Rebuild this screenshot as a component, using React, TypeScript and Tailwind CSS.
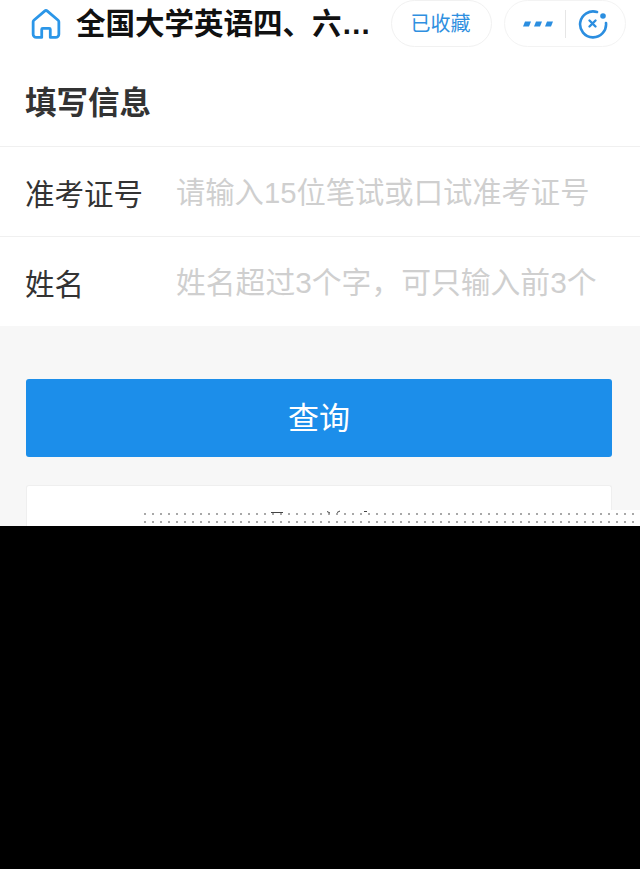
const FONT = "font-['Liberation_Sans','Noto_Sans_CJK_SC',sans-serif]"

function Header() {
  return (
    <div className="flex h-[47px] items-center bg-white pl-[31px] pr-[14px]">
      <svg width="30" height="30" viewBox="0 0 28 28" className="shrink-0" fill="none" stroke="#2b96e8" strokeWidth="2.6" strokeLinejoin="round">
        <path d="M10 26.5H5a3 3 0 0 1-3-3V12a2 2 0 0 1 .7-1.5L12.7 2a2 2 0 0 1 2.6 0l10 8.5a2 2 0 0 1 .7 1.5v11.5a3 3 0 0 1-3 3H18V19a1 1 0 0 0-1-1h-6a1 1 0 0 0-1 1z" />
      </svg>
      <div className="ml-[15px] w-[300px] shrink-0 whitespace-nowrap text-[29.5px] font-bold leading-[47px] text-[#111]">
        全国大学英语四、六…
      </div>
      <div className="ml-[15px] flex h-[47px] w-[101px] shrink-0 items-center justify-center rounded-full border border-[#f1f1f1] pr-[2px] text-[20px] text-[#2f8fe0]">
        已收藏
      </div>
      <div className="ml-[12px] flex h-[47px] w-[122px] shrink-0 items-center rounded-full border border-[#f3f3f3] pl-[18px]">
        <svg width="30" height="6" viewBox="0 0 30 6" className="shrink-0">
          <path d="M2 .5h6l-2 5H0zM13 .5h6l-2 5h-6zM24 .5h6l-2 5h-6z" fill="#2b8ee0" />
        </svg>
        <div className="ml-[12px] h-[28px] w-px bg-[#e6e6e6]" />
        <svg width="30" height="30" viewBox="0 0 30 30" className="ml-[12px] shrink-0" fill="none" stroke="#2b8ee0">
          <path d="M19 3a13 13 0 1 0 9 11" strokeWidth="2.6" strokeLinecap="round" />
          <circle cx="25" cy="7" r="2.8" fill="#2b8ee0" stroke="none" />
          <path d="M11.5 11.5l6 6M17.5 11.5l-6 6" strokeWidth="2.4" strokeLinecap="round" />
        </svg>
      </div>
    </div>
  )
}

function Row({ label, placeholder, inputSize }: { label: string; placeholder: string; inputSize: string }) {
  return (
    <div className="flex h-[90px] items-center border-t border-[#f0f0f0] pl-[25px]">
      <div className="w-[152px] shrink-0 pt-[8px] text-[29.5px] text-[#333]">{label}</div>
      <input
        placeholder={placeholder}
        className={`-ml-px min-w-0 flex-1 bg-transparent pt-[3px] outline-none placeholder:text-[#cfcfcf] ${inputSize}`}
      />
    </div>
  )
}

export default function App() {
  return (
    <div className={`flex h-[869px] w-[640px] flex-col overflow-hidden bg-[#f7f7f7] ${FONT}`}>
      <Header />
      <div className="flex h-[99px] items-center bg-white pl-[25px] pt-[14px] text-[31.5px] font-bold text-[#333]">
        填写信息
      </div>
      <div className="bg-white">
        <Row label="准考证号" placeholder="请输入15位笔试或口试准考证号" inputSize="text-[29.3px]" />
        <Row label="姓名" placeholder="姓名超过3个字，可只输入前3个" inputSize="text-[29.8px]" />
      </div>
      <div className="px-[26px] pt-[53px]">
        <button className="flex h-[78px] w-[586px] items-center justify-center rounded-[3px] bg-[#1c8eea] pt-[2px] text-[31px] text-white">
          查询
        </button>
        <div className="mt-[28px] h-[41px] w-[586px] rounded-t-[3px] border border-b-0 border-[#efefef] bg-white" />
      </div>
      <div className="relative flex-1 bg-black">
        {/* cut off dotted strip above the black area */}
        <div className="absolute left-[144px] right-0 top-[-16px] h-[16px] bg-white bg-[radial-gradient(circle,#a8a8a8_1px,transparent_1px)] bg-[length:8px_8px] bg-[position:-3px_0px]">
          <svg width="240" height="4" viewBox="0 0 240 4" className="absolute left-[125px] top-[0px]">
            <path d="M2 2.5h12M58 1.5l3 1.5M68 2.5l3-1.5M95 1.5h3" stroke="#444" strokeWidth="1" fill="none" />
          </svg>
        </div>
      </div>
    </div>
  )
}
